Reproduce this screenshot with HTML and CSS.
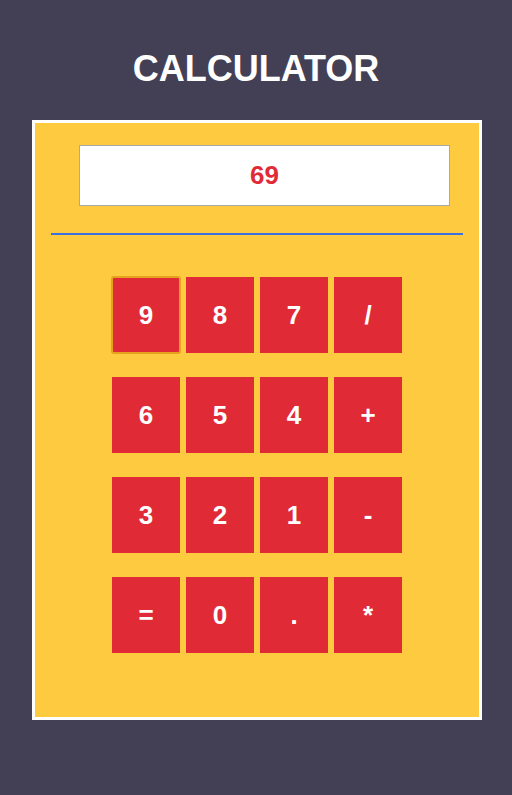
FILE: index.html
```html
<!DOCTYPE html>
<html lang="en">
<head>
<meta charset="utf-8">
<title>Calculator</title>
<link rel="stylesheet" href="styles.css">
</head>
<body>
<h1 class="title">CALCULATOR</h1>
<div class="calc">
  <div class="display">69</div>
  <div class="divider"></div>
  <div class="keys">
    <button class="key key-focus">9</button>
    <button class="key">8</button>
    <button class="key">7</button>
    <button class="key">/</button>
    <button class="key">6</button>
    <button class="key">5</button>
    <button class="key">4</button>
    <button class="key">+</button>
    <button class="key">3</button>
    <button class="key">2</button>
    <button class="key">1</button>
    <button class="key">-</button>
    <button class="key">=</button>
    <button class="key">0</button>
    <button class="key">.</button>
    <button class="key">*</button>
  </div>
</div>
</body>
</html>
```
FILE: styles.css
```css
html, body {
  margin: 0;
  padding: 0;
}
body {
  background: #434055;
  font-family: "Liberation Sans", Arial, sans-serif;
  width: 512px;
  height: 795px;
  overflow: hidden;
}
.title {
  margin: 0;
  padding-top: 48px;
  font-size: 36px;
  line-height: 42px;
  font-weight: bold;
  color: #ffffff;
  text-align: center;
}
.calc {
  box-sizing: border-box;
  margin: 30px 0 0 32px;
  width: 450px;
  height: 600px;
  border: 3px solid #ffffff;
  background: #fdca40;
  padding-top: 22px;
}
.display {
  box-sizing: border-box;
  margin-left: 44px;
  width: 371px;
  height: 61px;
  border: 1px solid #a9a9a9;
  background: #ffffff;
  color: #e02b37;
  font-size: 26px;
  font-weight: bold;
  line-height: 59px;
  text-align: center;
}
.divider {
  margin: 27px 16px 0 16px;
  height: 2px;
  background: #3b6fe4;
}
.keys {
  margin-top: 42px;
  display: grid;
  grid-template-columns: repeat(4, 68px);
  grid-auto-rows: 76px;
  column-gap: 6px;
  row-gap: 24px;
  justify-content: center;
}
.key {
  box-sizing: border-box;
  margin: 0;
  padding: 0;
  border: none;
  background: #e02b37;
  color: #ffffff;
  font-family: "Liberation Sans", Arial, sans-serif;
  font-size: 26px;
  font-weight: bold;
}
.key-focus {
  outline: 2px solid #e6a21e;
  outline-offset: -1px;
  border-radius: 2px;
}
```
